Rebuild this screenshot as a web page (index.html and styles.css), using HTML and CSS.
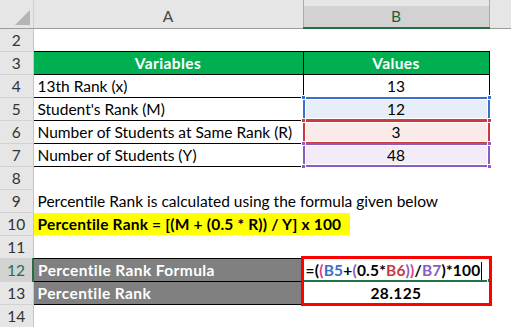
FILE: index.html
```html
<!DOCTYPE html>
<html lang="en">
  <head>
    <meta charset="UTF-8" />
    <title>Percentile Rank</title>
    <link rel="stylesheet" href="styles.css">
  </head>
  <body>
    <div class="sheet">
      <table class="grid">
        <colgroup>
          <col class="c-row" />
          <col class="c-a" />
          <col class="c-b" />
          <col class="c-rest" />
        </colgroup>
        <tr class="head">
          <th class="corner"><span class="tri"></span></th>
          <th>A</th>
          <th class="sel">B</th>
          <th></th>
        </tr>
        <tr><th class="num">2</th><td></td><td></td><td></td></tr>
        <tr class="title">
          <th class="num">3</th>
          <td class="box">Variables</td>
          <td class="box">Values</td>
          <td></td>
        </tr>
        <tr>
          <th class="num">4</th>
          <td class="box">13th Rank (x)</td>
          <td class="box val">13</td>
          <td></td>
        </tr>
        <tr>
          <th class="num">5</th>
          <td class="box">Student's Rank (M)</td>
          <td class="box val ref-blue">12</td>
          <td></td>
        </tr>
        <tr>
          <th class="num">6</th>
          <td class="box">Number of Students at Same Rank (R)</td>
          <td class="box val ref-red">3</td>
          <td></td>
        </tr>
        <tr>
          <th class="num">7</th>
          <td class="box">Number of Students (Y)</td>
          <td class="box val ref-purple">48</td>
          <td></td>
        </tr>
        <tr><th class="num">8</th><td></td><td></td><td></td></tr>
        <tr>
          <th class="num">9</th>
          <td class="spill">Percentile Rank is calculated using the formula given below</td>
          <td></td>
          <td></td>
        </tr>
        <tr>
          <th class="num">10</th>
          <td class="spill hl-cell"><div class="highlight">Percentile Rank = [(M + (0.5 * R)) / Y] x 100</div></td>
          <td></td>
          <td></td>
        </tr>
        <tr><th class="num">11</th><td></td><td></td><td></td></tr>
        <tr class="result">
          <th class="num active">12</th>
          <td class="box label">Percentile Rank Formula</td>
          <td class="box formula">=(<span class="p-pink">(</span><span class="r-blue">B5</span>+<span class="p-purple">(</span>0.5*<span class="r-red">B6</span><span class="p-purple">)</span><span class="p-pink">)</span>/<span class="r-purple">B7</span>)*100<span class="caret"></span></td>
          <td></td>
        </tr>
        <tr class="result">
          <th class="num">13</th>
          <td class="box label">Percentile Rank</td>
          <td class="box val strong">28.125</td>
          <td></td>
        </tr>
        <tr><th class="num">14</th><td></td><td></td><td></td></tr>
      </table>

      <div class="ref-box blue" style="top: 97px;">
        <i class="h tl"></i><i class="h tr"></i><i class="h bl"></i><i class="h br"></i>
      </div>
      <div class="ref-box red" style="top: 120px;">
        <i class="h tl"></i><i class="h tr"></i><i class="h bl"></i><i class="h br"></i>
      </div>
      <div class="ref-box purple" style="top: 143px;">
        <i class="h tl"></i><i class="h tr"></i><i class="h bl"></i><i class="h br"></i>
      </div>

      <div class="active-line"><i class="fill-handle"></i></div>
      <div class="callout"></div>
    </div>
  </body>
</html>
```

FILE: styles.css
```css
* {
  margin: 0;
  padding: 0;
  box-sizing: border-box;
}
body {
  background: #fff;
  font-family: Lato, "Liberation Sans", sans-serif;
  font-size: 15.5px;
  color: #000;
}
.sheet {
  position: relative;
  width: 511px;
  height: 327px;
  overflow: hidden;
}
.grid {
  width: 511px;
  table-layout: fixed;
  border-collapse: collapse;
}
.c-row {
  width: 33px;
}
.c-a {
  width: 270px;
}
.c-b {
  width: 186px;
}
.c-rest {
  width: 22px;
}
tr {
  height: 23px;
}
td,
th {
  padding: 0 4px;
  white-space: nowrap;
  overflow: visible;
  line-height: 22px;
  font-weight: normal;
}

/* headers */
.head {
  height: 28px;
}
.head th {
  background: #e6e6e6;
  color: #444;
  border-bottom: 1px solid #9b9b9b;
  text-align: center;
  padding-top: 6px;
  line-height: 21px;
}
.head th.sel {
  background: linear-gradient(#e6e6e6 0 6px, #d2d2d2 6px);
  color: #1e5e3a;
  border-left: 1px solid #ababab;
  border-right: 1px solid #ababab;
  border-bottom: 2px solid #217346;
}
.head th.corner {
  position: relative;
  border-right: 1px solid #d0d0d0;
}
.tri {
  position: absolute;
  left: 15px;
  top: 10px;
  width: 0;
  height: 0;
  border-left: 15px solid transparent;
  border-bottom: 15px solid #b4b4b4;
}
.num {
  background: #e6e6e6;
  color: #333;
  text-align: center;
  border-right: 1px solid #c6c6c6;
  border-bottom: 1px solid #d2d2d2;
  padding: 0;
}
.num.active {
  background: #d2d2d2;
  color: #217346;
  border-right: 2px solid #217346;
}

/* data table */
.box {
  border: 1px solid #000;
}
.title td.box {
  background: #00b050;
  color: #fff;
  font-weight: bold;
  letter-spacing: 0.4px;
  text-align: center;
}
.val {
  text-align: center;
}
.ref-blue {
  background: #e8eef9;
}
.ref-red {
  background: #fbeaea;
}
.ref-purple {
  background: #f1ecf8;
}
.hl-cell {
  padding: 0;
}
.highlight {
  width: 316px;
  height: 22px;
  background: #ffff00;
  font-weight: bold;
  letter-spacing: 0.2px;
  padding-left: 4px;
}
.result .label {
  background: #808080;
  color: #fff;
  font-weight: bold;
  letter-spacing: 0.4px;
}
.formula {
  font-weight: bold;
  letter-spacing: 0.2px;
  padding-left: 2px;
}
.strong {
  font-weight: bold;
  letter-spacing: 0.4px;
}
.p-pink {
  color: #d9408a;
}
.p-purple {
  color: #8a5cc0;
}
.r-blue {
  color: #3b6fc8;
}
.r-red {
  color: #c83a40;
}
.r-purple {
  color: #8a5cc0;
}
.caret {
  display: inline-block;
  width: 1px;
  height: 18px;
  margin-left: 1px;
  background: #000;
  vertical-align: -4px;
}

/* overlays drawn by Excel on top of the grid */
.ref-box {
  position: absolute;
  left: 303px;
  width: 187px;
  height: 24px;
  border: 2px solid;
  box-shadow: inset 0 0 0 1px #fff;
}
.ref-box.blue {
  border-color: #3b6fc8;
}
.ref-box.red {
  border-color: #c83a40;
}
.ref-box.purple {
  border-color: #8a5cc0;
}
.h {
  position: absolute;
  width: 5px;
  height: 5px;
  background: currentColor;
  border: 1px solid #fff;
}
.blue .h {
  color: #3b6fc8;
}
.red .h {
  color: #c83a40;
}
.purple .h {
  color: #8a5cc0;
}
.h.tl {
  left: -4px;
  top: -4px;
}
.h.tr {
  right: -4px;
  top: -4px;
}
.h.bl {
  left: -4px;
  bottom: -4px;
}
.h.br {
  right: -4px;
  bottom: -4px;
}
.active-line {
  position: absolute;
  left: 303px;
  top: 280px;
  width: 186px;
  height: 2px;
  background: #217346;
}
.fill-handle {
  position: absolute;
  right: -3px;
  top: -2px;
  width: 5px;
  height: 5px;
  background: #217346;
  border: 1px solid #fff;
}
.callout {
  position: absolute;
  left: 301px;
  top: 256px;
  width: 191px;
  height: 50px;
  border: 3px solid #ff0000;
}
```
